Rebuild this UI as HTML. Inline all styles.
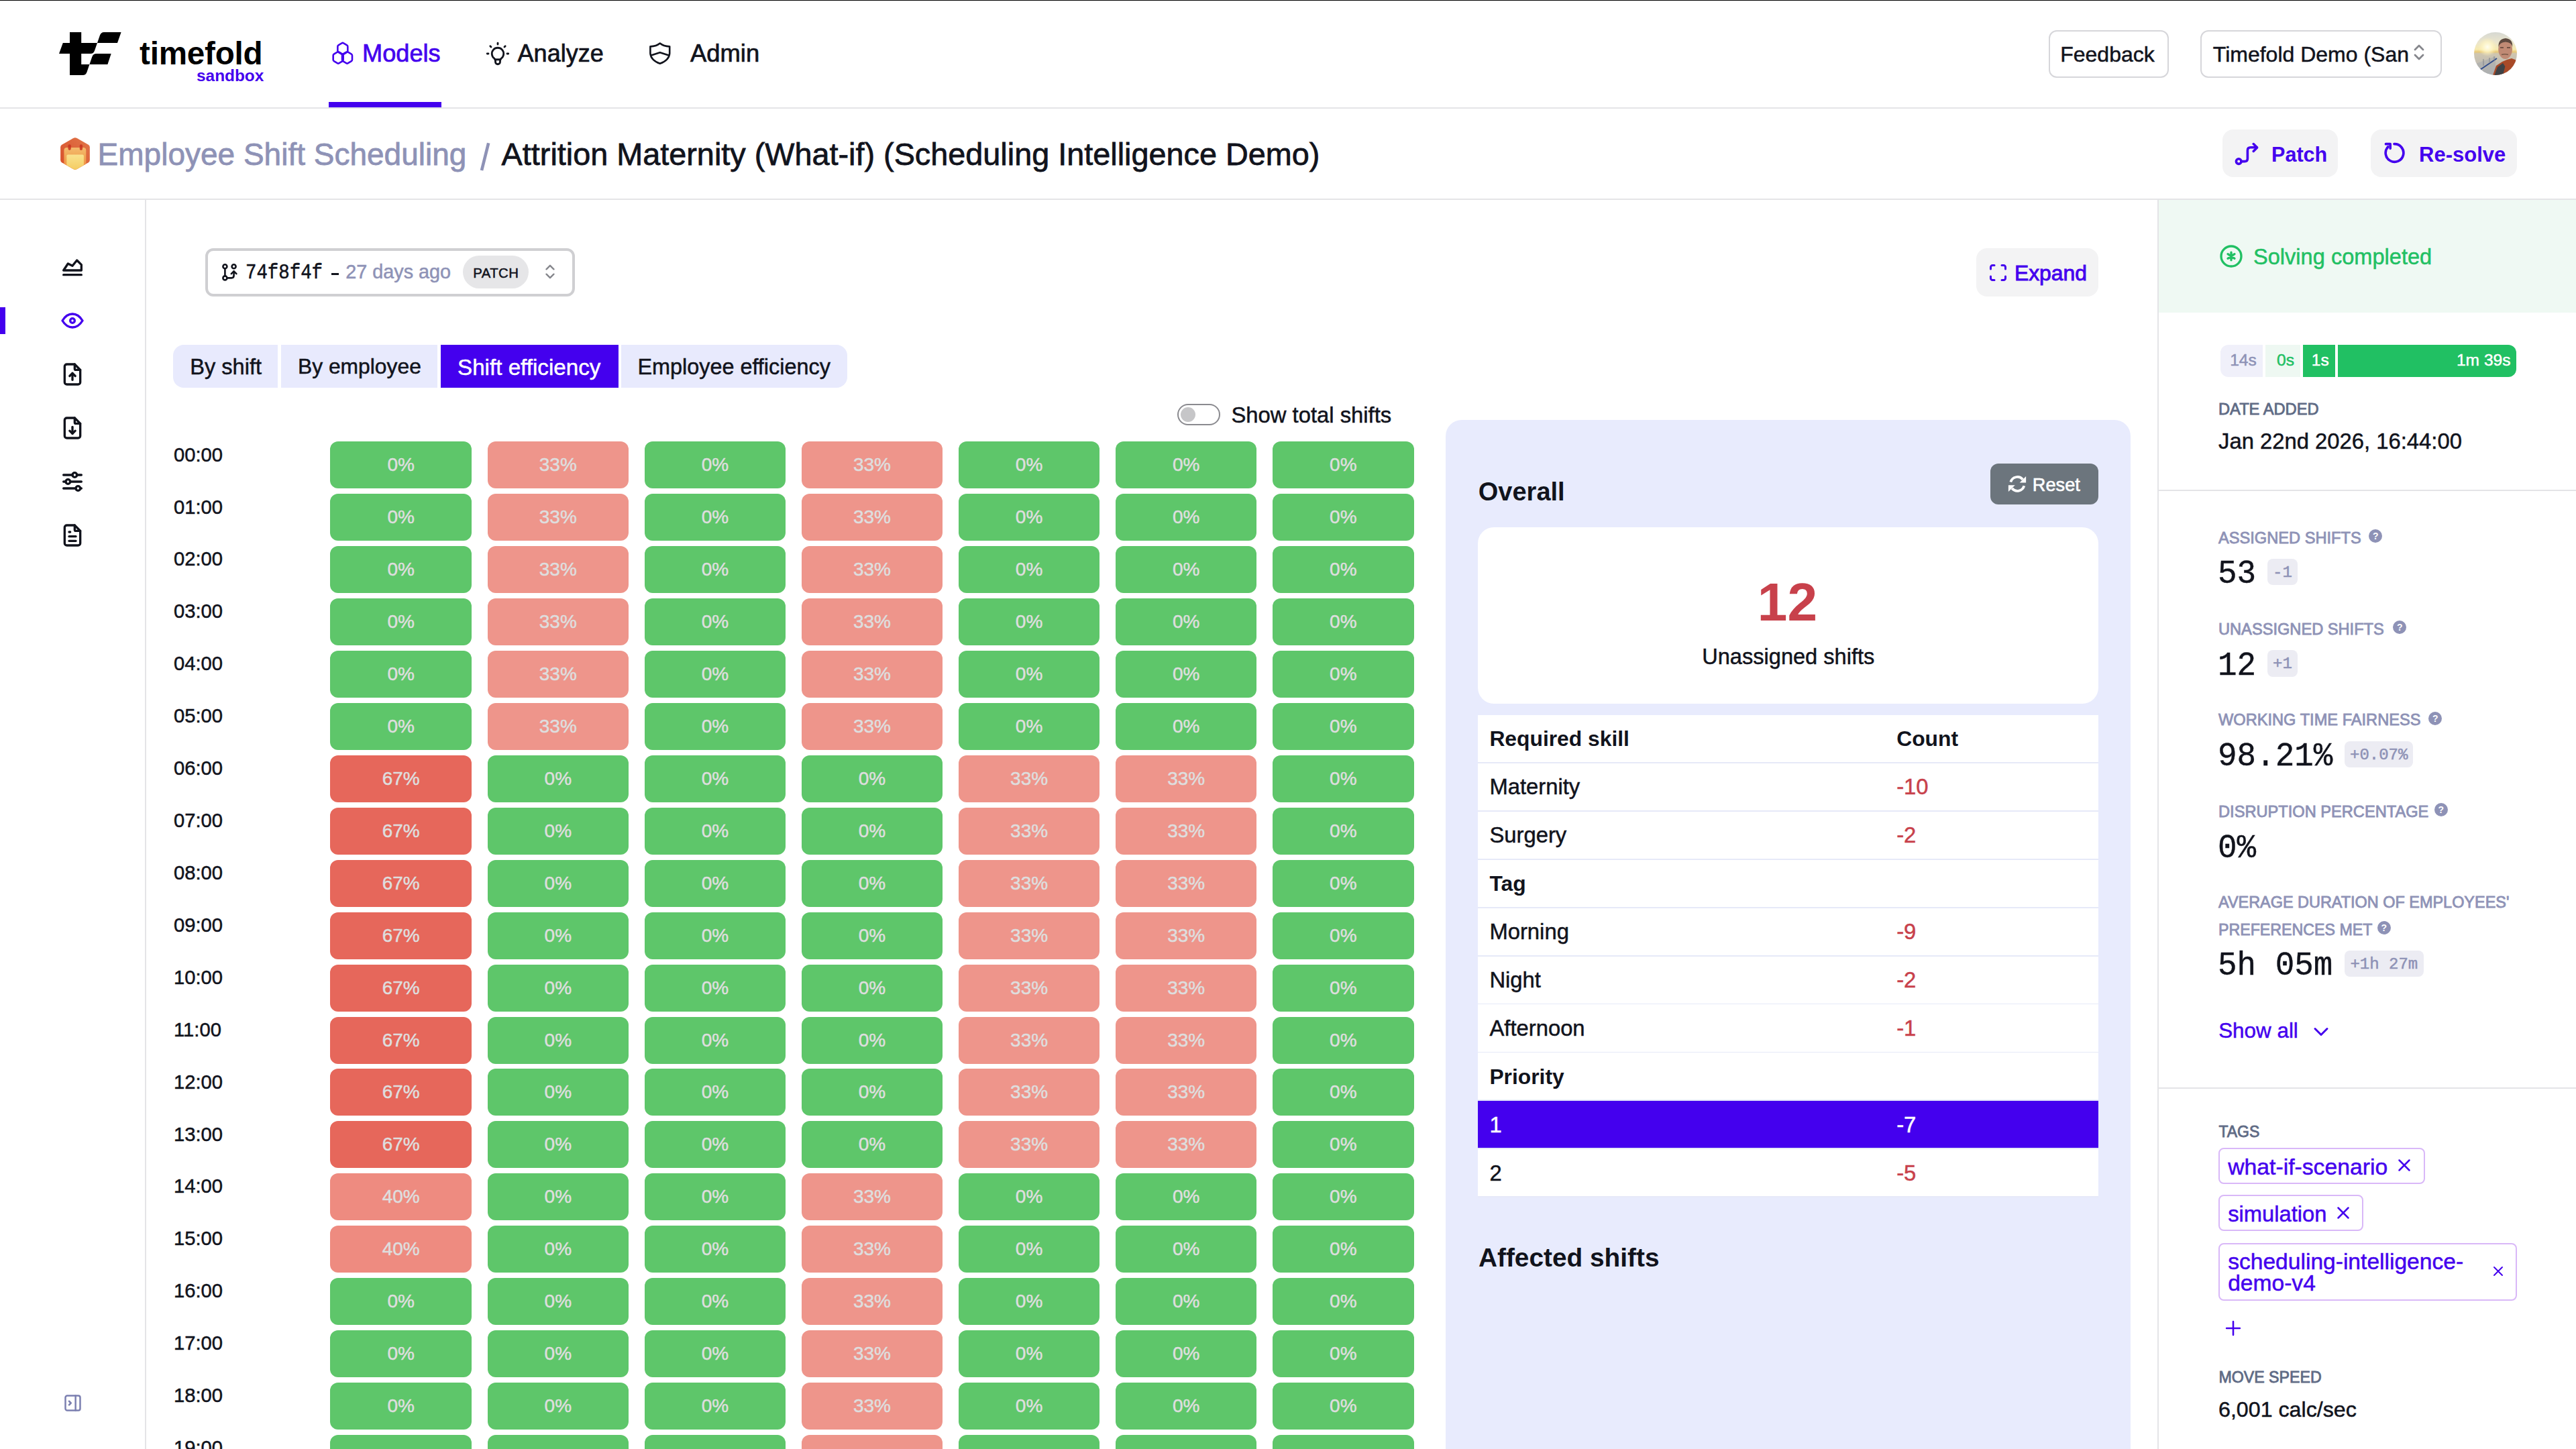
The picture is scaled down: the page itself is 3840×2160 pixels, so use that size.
<!DOCTYPE html>
<html><head><meta charset="utf-8"><title>Timefold</title>
<style>
html,body{margin:0;padding:0;width:3840px;height:2160px;overflow:hidden;background:#fff;}
#root{position:relative;width:1920px;height:1080px;zoom:2;-webkit-text-stroke-width:0.25px;font-family:"Liberation Sans",sans-serif;color:#11131c;overflow:hidden;background:#fff;}
@media (max-width:2500px){html,body{width:1920px;height:1080px;}#root{zoom:1;}}
.a{position:absolute;}
.t{position:absolute;white-space:nowrap;line-height:1;}
.b{font-weight:700;-webkit-text-stroke-width:0;}
.mono{font-family:"Liberation Mono",monospace;}
.pur{color:#4400ee;}
.gp{color:#8e92b6;}
.sl{color:#5f6b85;}
svg{position:absolute;overflow:visible;}
.ic{fill:none;stroke-linecap:round;stroke-linejoin:round;}
.cell{position:absolute;width:105.3px;height:35px;border-radius:6px;color:#dedede;font-size:14px;line-height:35px;text-align:center;}
.g{background:#5ec66a;}
.r67{background:#e6675b;}
.r33{background:#ee958b;}
.r40{background:#ee8b80;}
.tl{position:absolute;left:129.5px;font-size:14.6px;line-height:1;white-space:nowrap;}
.lbl{position:absolute;font-size:11.7px;font-weight:400;-webkit-text-stroke-width:0.42px;line-height:1;white-space:nowrap;letter-spacing:0px;}
.qm{position:absolute;width:10px;height:10px;border-radius:50%;background:#8e92b6;color:#fff;font-size:7px;font-weight:700;line-height:10px;text-align:center;margin-top:-0.9px;-webkit-text-stroke-width:0;}
.val{position:absolute;font-family:"Liberation Mono",monospace;font-size:23.8px;line-height:1;white-space:nowrap;color:#11131c;transform:translateY(2.3px) scaleY(1.05);transform-origin:0 85%;-webkit-text-stroke-width:0.2px;}
.dl{position:absolute;height:19.6px;border-radius:4px;background:#ececf3;color:#8e92b6;font-family:"Liberation Mono",monospace;font-size:12px;line-height:20.6px;text-align:center;white-space:nowrap;}
.tag{position:absolute;left:1653.3px;height:25px;border:1px solid #d9b8f8;border-radius:4px;color:#4400ee;font-size:16.5px;line-height:1;}
.tr{position:absolute;left:1101.5px;width:462.4px;height:35.1px;background:#fff;border-bottom:1px solid #e6e9f8;}
</style></head>
<body><div id="root">
<div class="a" style="left:0;top:0;width:1920px;height:0.5px;background:#000"></div>
<svg style="left:44px;top:24px;width:46.3px;height:32px" viewBox="0 0 92.6 64">
<path fill="#000" d="M16,0H33.2V16H57L53,27.5Q51.4,32 47,32H33.2V48H45.4L41.5,59.5Q39.8,64 35.5,64H16V32H0L5.8,16H16Z"/>
<path fill="#000" d="M67,0H92.6L87,16H57L60.8,5Q62.6,0 67,0Z"/>
<path fill="#000" d="M56,32H77.7L72.4,48H45.4L49,37.5Q50.6,32 56,32Z"/>
</svg>
<div class="t b" style="left:104px;top:28.1px;font-size:23.8px;letter-spacing:-0.1px;color:#000">timefold</div>
<div class="t b pur" style="left:146.5px;top:50.5px;font-size:12.2px">sandbox</div>
<svg class="ic" style="left:245px;top:29.6px;width:20px;height:20px" viewBox="0 0 24 24" stroke="#4400ee" stroke-width="1.55">
<path d="M4 18v-3.7a1.5 1.5 0 0 1 .7 -1.3l3 -1.8a1.5 1.5 0 0 1 1.6 0l3 1.8a1.5 1.5 0 0 1 .7 1.3v3.7a1.5 1.5 0 0 1 -.7 1.3l-3 1.8a1.5 1.5 0 0 1 -1.6 0l-3 -1.8a1.5 1.5 0 0 1 -.7 -1.3z"/>
<path d="M12 18v-3.7a1.5 1.5 0 0 1 .7 -1.3l3 -1.8a1.5 1.5 0 0 1 1.6 0l3 1.8a1.5 1.5 0 0 1 .7 1.3v3.7a1.5 1.5 0 0 1 -.7 1.3l-3 1.8a1.5 1.5 0 0 1 -1.6 0l-3 -1.8a1.5 1.5 0 0 1 -.7 -1.3z"/>
<path d="M8 10v-3.7a1.5 1.5 0 0 1 .7 -1.3l3 -1.8a1.5 1.5 0 0 1 1.6 0l3 1.8a1.5 1.5 0 0 1 .7 1.3v3.7a1.5 1.5 0 0 1 -.7 1.3l-3 1.8a1.5 1.5 0 0 1 -1.6 0l-3 -1.8a1.5 1.5 0 0 1 -.7 -1.3z"/>
</svg>
<div class="t pur" style="left:270px;top:31.2px;font-size:18.1px;-webkit-text-stroke-width:0.35px">Models</div>
<div class="a" style="left:245px;top:76px;width:84px;height:4px;background:#4400ee"></div>
<svg class="ic" style="left:360.45px;top:29.4px;width:21px;height:21px" viewBox="0 0 24 24" stroke="#11131c" stroke-width="1.6">
<path d="M3 12h1m8 -9v1m8 8h1m-15.4 -6.4l.7 .7m12.1 -.7l-.7 .7"/>
<path d="M9 16a5 5 0 1 1 6 0a3.5 3.5 0 0 0 -1 3a2 2 0 0 1 -4 0a3.5 3.5 0 0 0 -1 -3"/>
<path d="M9.7 17l4.6 0"/>
</svg>
<div class="t" style="left:385.8px;top:31.2px;font-size:18px;-webkit-text-stroke-width:0.35px">Analyze</div>
<svg class="ic" style="left:0;top:0;width:1px;height:1px" stroke="#11131c" stroke-width="1.3">
<path d="M491.9 32.3C489.9 34 487.7 34.6 484.7 34.7V39.8C485 43.3 488 46 491.9 47.4C495.8 46 498.8 43.3 499.1 39.8V34.7C496.1 34.6 493.9 34 491.9 32.3Z"/>
<path d="M485.3 41.2L491.9 39.1L498.5 41.3"/>
</svg>
<div class="t" style="left:514.5px;top:31.2px;font-size:18.2px;-webkit-text-stroke-width:0.35px">Admin</div>
<div class="a" style="left:0;top:80px;width:1920px;height:1px;background:#e4e4e7"></div>
<div class="a" style="left:1527px;top:22.4px;width:87.5px;height:33.5px;border:1px solid #d6d6da;border-radius:6px"></div>
<div class="t" style="left:1535.6px;top:32.3px;font-size:16px">Feedback</div>
<div class="a" style="left:1640px;top:22.4px;width:178px;height:33.5px;border:1px solid #d6d6da;border-radius:6px"></div>
<div class="t" style="left:1649.4px;top:32.3px;font-size:16px">Timefold Demo (San</div>
<svg class="ic" style="left:1797px;top:31px;width:12px;height:16px" viewBox="0 0 12 16" stroke="#85868c" stroke-width="1.4">
<path d="M3 6l3 -3l3 3M3 10l3 3l3 -3"/>
</svg>
<svg style="left:1844px;top:24px;width:32px;height:32px" viewBox="0 0 32 32">
<defs><clipPath id="avc"><circle cx="16" cy="16" r="16"/></clipPath>
<linearGradient id="sky" x1="0" y1="0" x2="0" y2="1"><stop offset="0" stop-color="#d6d8d2"/><stop offset="0.25" stop-color="#ece6cc"/><stop offset="0.40" stop-color="#f6eab0"/><stop offset="0.46" stop-color="#e8c878"/><stop offset="0.5" stop-color="#cfc6b0"/><stop offset="1" stop-color="#b4b6b8"/></linearGradient>
<radialGradient id="sun"><stop offset="0" stop-color="#fffef0"/><stop offset="0.5" stop-color="#fff6c8" stop-opacity="0.8"/><stop offset="1" stop-color="#fff0b0" stop-opacity="0"/></radialGradient></defs>
<g clip-path="url(#avc)">
<rect width="32" height="32" fill="url(#sky)"/>
<circle cx="10" cy="11" r="7" fill="url(#sun)"/>
<path d="M0 24L16 18V32H0Z" fill="#a9abae" opacity="0.6"/>
<path d="M4.5 28L17 19.5" stroke="#2e4a8a" stroke-width="0.9"/>
<path d="M7 20V25M11.5 19V23M15 18V21" stroke="#8a8c90" stroke-width="0.6"/>
<ellipse cx="23.3" cy="12.8" rx="5.2" ry="7.2" fill="#c08a74"/>
<path d="M18.2 11Q18 5 23.5 4.5Q29 5 28.6 11Q28 7.5 23.5 7.2Q19 7.5 18.2 11Z" fill="#5e4a40"/>
<path d="M19.5 11.5H22M24.5 11.5H27" stroke="#5a4034" stroke-width="0.8"/>
<path d="M20.5 16.8Q23 16 25.5 16.8" stroke="#7a5a48" stroke-width="0.8" fill="none"/>
<path d="M14 32L16.5 25L21 22L24.5 20.5L28 19.5L32 21V32Z" fill="#a84a28"/>
<path d="M15.2 32L17.5 26L21.5 23L23.2 25.5L21.5 32Z" fill="#3e4246"/>
</g></svg>
<div class="a" style="left:0;top:148px;width:1920px;height:1px;background:#e4e4e7"></div>
<svg style="left:44px;top:101px;width:24px;height:27px" viewBox="0 0 24 27">
<defs><linearGradient id="hx" x1="0" y1="1" x2="1" y2="0"><stop offset="0" stop-color="#d64a26"/><stop offset="1" stop-color="#e27a4c"/></linearGradient>
<linearGradient id="bd" x1="0" y1="0" x2="0" y2="1"><stop offset="0" stop-color="#f3bb6c"/><stop offset="0.5" stop-color="#f0a050"/><stop offset="1" stop-color="#f08a3c"/></linearGradient>
<linearGradient id="pg" x1="0" y1="0" x2="0" y2="1"><stop offset="0" stop-color="#f9e28e"/><stop offset="1" stop-color="#f4c95c"/></linearGradient>
<clipPath id="hc"><path d="M10.4 2.1Q12 1.2 13.6 2.1L21.9 6.9Q22.93 7.5 22.93 8.7V18.3Q22.93 19.5 21.9 20.1L13.6 24.9Q12 25.8 10.4 24.9L2.1 20.1Q1.07 19.5 1.07 18.3V8.7Q1.07 7.5 2.1 6.9Z"/></clipPath></defs>
<g clip-path="url(#hc)">
<rect x="0" y="0" width="24" height="27" fill="url(#hx)"/>
<path d="M3.73 11.1Q3.73 9.06 5.8 9.06H18.1Q20.15 9.06 20.15 11.1V27H3.73Z" fill="url(#bd)"/>
<path d="M5.66 15.3Q5.66 14.25 6.7 14.25H17.4Q18.46 14.25 18.46 15.3V27H5.66Z" fill="url(#pg)"/>
<rect x="6.75" y="6.6" width="2.15" height="4.4" rx="1.07" fill="#c8321e" opacity="0.85"/>
<rect x="15.4" y="6.6" width="2.1" height="4.4" rx="1.05" fill="#c8321e" opacity="0.85"/>
</g>
</svg>
<div class="t gp" style="left:72.8px;top:103.7px;font-size:23px;-webkit-text-stroke-width:0.38px">Employee Shift Scheduling</div>
<svg style="left:0;top:0;width:1px;height:1px"><path d="M359 127L364.1 106.6" stroke="#8e92b6" stroke-width="2.3" fill="none"/></svg>
<div class="t" style="left:373.8px;top:103.7px;font-size:23.4px;-webkit-text-stroke-width:0.38px">Attrition Maternity (What-if) (Scheduling Intelligence Demo)</div>
<div class="a" style="left:1656.4px;top:96.4px;width:86.2px;height:35.6px;border-radius:8px;background:#f3f3f4"></div>
<svg class="ic" style="left:1650px;top:95px;width:40px;height:40px" viewBox="0 0 40 40" stroke="#4400ee" stroke-width="1.8">
<circle cx="18.6" cy="25.3" r="1.9"/><path d="M20.5 25.3H23Q25.2 25.3 25.2 23.1V17.1Q25.2 14.9 27.4 14.9H32.2"/><path d="M29.6 12.3L32.3 15L29.6 17.7"/>
</svg>
<div class="t b pur" style="left:1693px;top:107.3px;font-size:15.3px">Patch</div>
<div class="a" style="left:1767px;top:96.4px;width:108.8px;height:35.6px;border-radius:8px;background:#f3f3f4"></div>
<svg class="ic" style="left:1774.5px;top:104px;width:20px;height:20px" viewBox="0 0 24 24" stroke="#4400ee" stroke-width="2.2">
<path d="M6.5 6.5a8 8 0 1 0 5.5 -2.5"/><path d="M4.5 4h4v4" transform="rotate(0)"/>
</svg>
<div class="t b pur" style="left:1803px;top:107.3px;font-size:15.5px">Re-solve</div>
<div class="a" style="left:108px;top:149px;width:1px;height:931px;background:#e4e4e7"></div>
<div class="a" style="left:0;top:229px;width:4px;height:20px;background:#4400ee"></div>
<svg class="ic" viewBox="0 0 24 24" stroke-width="2" stroke="#11131c" style="left:44px;top:189px;width:20px;height:20px">
<path d="M4 19h16"/><path d="M4 15l4 -6l4 2l4 -5l4 4v5h-16z"/></svg>
<svg class="ic" viewBox="0 0 24 24" stroke-width="2" stroke="#4400ee" style="left:44px;top:229px;width:20px;height:20px">
<path d="M10 12a2 2 0 1 0 4 0a2 2 0 0 0 -4 0"/><path d="M21 12c-2.4 4 -5.4 6 -9 6c-3.6 0 -6.6 -2 -9 -6c2.4 -4 5.4 -6 9 -6c3.6 0 6.6 2 9 6"/></svg>
<svg class="ic" viewBox="0 0 24 24" stroke-width="2" stroke="#11131c" style="left:44px;top:269px;width:20px;height:20px">
<path d="M14 3v4a1 1 0 0 0 1 1h4"/><path d="M17 21h-10a2 2 0 0 1 -2 -2v-14a2 2 0 0 1 2 -2h7l5 5v11a2 2 0 0 1 -2 2z"/><path d="M12 11v6"/><path d="M9.5 13.5l2.5 -2.5l2.5 2.5"/></svg>
<svg class="ic" viewBox="0 0 24 24" stroke-width="2" stroke="#11131c" style="left:44px;top:309px;width:20px;height:20px">
<path d="M14 3v4a1 1 0 0 0 1 1h4"/><path d="M17 21h-10a2 2 0 0 1 -2 -2v-14a2 2 0 0 1 2 -2h7l5 5v11a2 2 0 0 1 -2 2z"/><path d="M12 17v-6"/><path d="M9.5 14.5l2.5 2.5l2.5 -2.5"/></svg>
<svg class="ic" viewBox="0 0 24 24" stroke-width="2" stroke="#11131c" style="left:44px;top:349px;width:20px;height:20px">
<path d="M14 6m-2 0a2 2 0 1 0 4 0a2 2 0 1 0 -4 0"/><path d="M4 6l8 0"/><path d="M16 6l4 0"/><path d="M8 12m-2 0a2 2 0 1 0 4 0a2 2 0 1 0 -4 0"/><path d="M4 12l2 0"/><path d="M10 12l10 0"/><path d="M17 18m-2 0a2 2 0 1 0 4 0a2 2 0 1 0 -4 0"/><path d="M4 18l11 0"/><path d="M19 18l1 0"/></svg>
<svg class="ic" viewBox="0 0 24 24" stroke-width="2" stroke="#11131c" style="left:44px;top:389px;width:20px;height:20px">
<path d="M14 3v4a1 1 0 0 0 1 1h4"/><path d="M17 21h-10a2 2 0 0 1 -2 -2v-14a2 2 0 0 1 2 -2h7l5 5v11a2 2 0 0 1 -2 2z"/><path d="M9 9l1 0"/><path d="M9 13l6 0"/><path d="M9 17l6 0"/></svg>
<svg class="ic" viewBox="0 0 24 24" stroke-width="1.8" stroke="#7b7fb0" style="left:45.75px;top:1037.6px;width:16.5px;height:16.5px">
<path d="M4 4m0 2a2 2 0 0 1 2 -2h12a2 2 0 0 1 2 2v12a2 2 0 0 1 -2 2h-12a2 2 0 0 1 -2 -2z"/><path d="M15 4v16"/><path d="M8 10l2 2l-2 2"/></svg>
<div class="a" style="left:153px;top:185px;width:271.5px;height:32px;border:2px solid #cfcfd2;border-radius:6px"></div>
<svg class="ic" viewBox="0 0 24 24" stroke-width="1.3" stroke="#11131c" style="left:160px;top:192px;width:24px;height:24px">
<circle cx="7.7" cy="6.6" r="1.5"/><circle cx="7.7" cy="15.2" r="1.5"/><circle cx="14.3" cy="6.6" r="1.5"/><path d="M7.7 8.1V13.7"/><path d="M9.2 15.2H12.5Q14.3 15.2 14.3 13.4V10.3"/><path d="M12.4 12.1L14.3 10.2L16.2 12.1"/></svg>
<div class="t mono" style="left:183px;top:197.2px;font-size:13.7px;transform:scaleY(1.14);transform-origin:0 85%">74f8f4f</div>
<div class="a" style="left:247px;top:203.6px;width:5.4px;height:1.3px;background:#11131c"></div>
<div class="t gp" style="left:257.6px;top:195.6px;font-size:14.4px">27 days ago</div>
<div class="a" style="left:344.8px;top:190.6px;width:49.2px;height:24.4px;border-radius:12.2px;background:#e6e6e8"></div>
<div class="t" style="left:352.6px;top:198.5px;font-size:10.2px;letter-spacing:0.2px">PATCH</div>
<svg class="ic" viewBox="0 0 12 16" stroke-width="1.3" stroke="#85868c" style="left:404.5px;top:195px;width:11px;height:15px">
<path d="M3 6l3 -3l3 3M3 10l3 3l3 -3"/></svg>
<div class="a" style="left:1473px;top:184.9px;width:91px;height:35.9px;border-radius:8px;background:#f3f3f4"></div>
<svg class="ic" viewBox="0 0 24 24" stroke-width="2.2" stroke="#4400ee" style="left:1480.75px;top:194.75px;width:16.5px;height:16.5px">
<path d="M4 8v-2a2 2 0 0 1 2 -2h2"/><path d="M4 16v2a2 2 0 0 0 2 2h2"/><path d="M16 4h2a2 2 0 0 1 2 2v2"/><path d="M16 20h2a2 2 0 0 0 2 -2v-2"/></svg>
<div class="t pur" style="left:1501.5px;top:196px;font-size:15.9px;-webkit-text-stroke-width:0.45px">Expand</div>
<div class="a" style="left:129px;top:257px;width:78px;height:32px;background:#e8eafd;border-radius:8px 0 0 8px"></div>
<div class="t" style="left:141.6px;top:265.7px;font-size:16.3px;color:#11131c">By shift</div>
<div class="a" style="left:209.6px;top:257px;width:116.4px;height:32px;background:#e8eafd;border-radius:0"></div>
<div class="t" style="left:222px;top:265.7px;font-size:15.9px;color:#11131c">By employee</div>
<div class="a" style="left:328.5px;top:257px;width:132.5px;height:32px;background:#4400ee;border-radius:0"></div>
<div class="t" style="left:341px;top:265.7px;font-size:16.6px;color:#fff">Shift efficiency</div>
<div class="a" style="left:463px;top:257px;width:168.70000000000005px;height:32px;background:#e8eafd;border-radius:0 8px 8px 0"></div>
<div class="t" style="left:475.2px;top:265.7px;font-size:16.2px;color:#11131c">Employee efficiency</div>
<div class="a" style="left:877.5px;top:301px;width:30px;height:14px;border:1px solid #8a8a8f;border-radius:8px"></div>
<div class="a" style="left:880px;top:303.5px;width:11px;height:11px;border-radius:50%;background:#c6c6c8"></div>
<div class="t" style="left:917.7px;top:301.5px;font-size:16.4px">Show total shifts</div>
<div class="tl" style="top:331.80px">00:00</div>
<div class="cell g" style="left:246.2px;top:329.20px">0%</div>
<div class="cell r33" style="left:363.25px;top:329.20px">33%</div>
<div class="cell g" style="left:480.3px;top:329.20px">0%</div>
<div class="cell r33" style="left:597.35px;top:329.20px">33%</div>
<div class="cell g" style="left:714.4px;top:329.20px">0%</div>
<div class="cell g" style="left:831.45px;top:329.20px">0%</div>
<div class="cell g" style="left:948.5px;top:329.20px">0%</div>
<div class="tl" style="top:370.76px">01:00</div>
<div class="cell g" style="left:246.2px;top:368.16px">0%</div>
<div class="cell r33" style="left:363.25px;top:368.16px">33%</div>
<div class="cell g" style="left:480.3px;top:368.16px">0%</div>
<div class="cell r33" style="left:597.35px;top:368.16px">33%</div>
<div class="cell g" style="left:714.4px;top:368.16px">0%</div>
<div class="cell g" style="left:831.45px;top:368.16px">0%</div>
<div class="cell g" style="left:948.5px;top:368.16px">0%</div>
<div class="tl" style="top:409.72px">02:00</div>
<div class="cell g" style="left:246.2px;top:407.12px">0%</div>
<div class="cell r33" style="left:363.25px;top:407.12px">33%</div>
<div class="cell g" style="left:480.3px;top:407.12px">0%</div>
<div class="cell r33" style="left:597.35px;top:407.12px">33%</div>
<div class="cell g" style="left:714.4px;top:407.12px">0%</div>
<div class="cell g" style="left:831.45px;top:407.12px">0%</div>
<div class="cell g" style="left:948.5px;top:407.12px">0%</div>
<div class="tl" style="top:448.68px">03:00</div>
<div class="cell g" style="left:246.2px;top:446.08px">0%</div>
<div class="cell r33" style="left:363.25px;top:446.08px">33%</div>
<div class="cell g" style="left:480.3px;top:446.08px">0%</div>
<div class="cell r33" style="left:597.35px;top:446.08px">33%</div>
<div class="cell g" style="left:714.4px;top:446.08px">0%</div>
<div class="cell g" style="left:831.45px;top:446.08px">0%</div>
<div class="cell g" style="left:948.5px;top:446.08px">0%</div>
<div class="tl" style="top:487.64px">04:00</div>
<div class="cell g" style="left:246.2px;top:485.04px">0%</div>
<div class="cell r33" style="left:363.25px;top:485.04px">33%</div>
<div class="cell g" style="left:480.3px;top:485.04px">0%</div>
<div class="cell r33" style="left:597.35px;top:485.04px">33%</div>
<div class="cell g" style="left:714.4px;top:485.04px">0%</div>
<div class="cell g" style="left:831.45px;top:485.04px">0%</div>
<div class="cell g" style="left:948.5px;top:485.04px">0%</div>
<div class="tl" style="top:526.60px">05:00</div>
<div class="cell g" style="left:246.2px;top:524.00px">0%</div>
<div class="cell r33" style="left:363.25px;top:524.00px">33%</div>
<div class="cell g" style="left:480.3px;top:524.00px">0%</div>
<div class="cell r33" style="left:597.35px;top:524.00px">33%</div>
<div class="cell g" style="left:714.4px;top:524.00px">0%</div>
<div class="cell g" style="left:831.45px;top:524.00px">0%</div>
<div class="cell g" style="left:948.5px;top:524.00px">0%</div>
<div class="tl" style="top:565.56px">06:00</div>
<div class="cell r67" style="left:246.2px;top:562.96px">67%</div>
<div class="cell g" style="left:363.25px;top:562.96px">0%</div>
<div class="cell g" style="left:480.3px;top:562.96px">0%</div>
<div class="cell g" style="left:597.35px;top:562.96px">0%</div>
<div class="cell r33" style="left:714.4px;top:562.96px">33%</div>
<div class="cell r33" style="left:831.45px;top:562.96px">33%</div>
<div class="cell g" style="left:948.5px;top:562.96px">0%</div>
<div class="tl" style="top:604.52px">07:00</div>
<div class="cell r67" style="left:246.2px;top:601.92px">67%</div>
<div class="cell g" style="left:363.25px;top:601.92px">0%</div>
<div class="cell g" style="left:480.3px;top:601.92px">0%</div>
<div class="cell g" style="left:597.35px;top:601.92px">0%</div>
<div class="cell r33" style="left:714.4px;top:601.92px">33%</div>
<div class="cell r33" style="left:831.45px;top:601.92px">33%</div>
<div class="cell g" style="left:948.5px;top:601.92px">0%</div>
<div class="tl" style="top:643.48px">08:00</div>
<div class="cell r67" style="left:246.2px;top:640.88px">67%</div>
<div class="cell g" style="left:363.25px;top:640.88px">0%</div>
<div class="cell g" style="left:480.3px;top:640.88px">0%</div>
<div class="cell g" style="left:597.35px;top:640.88px">0%</div>
<div class="cell r33" style="left:714.4px;top:640.88px">33%</div>
<div class="cell r33" style="left:831.45px;top:640.88px">33%</div>
<div class="cell g" style="left:948.5px;top:640.88px">0%</div>
<div class="tl" style="top:682.44px">09:00</div>
<div class="cell r67" style="left:246.2px;top:679.84px">67%</div>
<div class="cell g" style="left:363.25px;top:679.84px">0%</div>
<div class="cell g" style="left:480.3px;top:679.84px">0%</div>
<div class="cell g" style="left:597.35px;top:679.84px">0%</div>
<div class="cell r33" style="left:714.4px;top:679.84px">33%</div>
<div class="cell r33" style="left:831.45px;top:679.84px">33%</div>
<div class="cell g" style="left:948.5px;top:679.84px">0%</div>
<div class="tl" style="top:721.40px">10:00</div>
<div class="cell r67" style="left:246.2px;top:718.80px">67%</div>
<div class="cell g" style="left:363.25px;top:718.80px">0%</div>
<div class="cell g" style="left:480.3px;top:718.80px">0%</div>
<div class="cell g" style="left:597.35px;top:718.80px">0%</div>
<div class="cell r33" style="left:714.4px;top:718.80px">33%</div>
<div class="cell r33" style="left:831.45px;top:718.80px">33%</div>
<div class="cell g" style="left:948.5px;top:718.80px">0%</div>
<div class="tl" style="top:760.36px">11:00</div>
<div class="cell r67" style="left:246.2px;top:757.76px">67%</div>
<div class="cell g" style="left:363.25px;top:757.76px">0%</div>
<div class="cell g" style="left:480.3px;top:757.76px">0%</div>
<div class="cell g" style="left:597.35px;top:757.76px">0%</div>
<div class="cell r33" style="left:714.4px;top:757.76px">33%</div>
<div class="cell r33" style="left:831.45px;top:757.76px">33%</div>
<div class="cell g" style="left:948.5px;top:757.76px">0%</div>
<div class="tl" style="top:799.32px">12:00</div>
<div class="cell r67" style="left:246.2px;top:796.72px">67%</div>
<div class="cell g" style="left:363.25px;top:796.72px">0%</div>
<div class="cell g" style="left:480.3px;top:796.72px">0%</div>
<div class="cell g" style="left:597.35px;top:796.72px">0%</div>
<div class="cell r33" style="left:714.4px;top:796.72px">33%</div>
<div class="cell r33" style="left:831.45px;top:796.72px">33%</div>
<div class="cell g" style="left:948.5px;top:796.72px">0%</div>
<div class="tl" style="top:838.28px">13:00</div>
<div class="cell r67" style="left:246.2px;top:835.68px">67%</div>
<div class="cell g" style="left:363.25px;top:835.68px">0%</div>
<div class="cell g" style="left:480.3px;top:835.68px">0%</div>
<div class="cell g" style="left:597.35px;top:835.68px">0%</div>
<div class="cell r33" style="left:714.4px;top:835.68px">33%</div>
<div class="cell r33" style="left:831.45px;top:835.68px">33%</div>
<div class="cell g" style="left:948.5px;top:835.68px">0%</div>
<div class="tl" style="top:877.24px">14:00</div>
<div class="cell r40" style="left:246.2px;top:874.64px">40%</div>
<div class="cell g" style="left:363.25px;top:874.64px">0%</div>
<div class="cell g" style="left:480.3px;top:874.64px">0%</div>
<div class="cell r33" style="left:597.35px;top:874.64px">33%</div>
<div class="cell g" style="left:714.4px;top:874.64px">0%</div>
<div class="cell g" style="left:831.45px;top:874.64px">0%</div>
<div class="cell g" style="left:948.5px;top:874.64px">0%</div>
<div class="tl" style="top:916.20px">15:00</div>
<div class="cell r40" style="left:246.2px;top:913.60px">40%</div>
<div class="cell g" style="left:363.25px;top:913.60px">0%</div>
<div class="cell g" style="left:480.3px;top:913.60px">0%</div>
<div class="cell r33" style="left:597.35px;top:913.60px">33%</div>
<div class="cell g" style="left:714.4px;top:913.60px">0%</div>
<div class="cell g" style="left:831.45px;top:913.60px">0%</div>
<div class="cell g" style="left:948.5px;top:913.60px">0%</div>
<div class="tl" style="top:955.16px">16:00</div>
<div class="cell g" style="left:246.2px;top:952.56px">0%</div>
<div class="cell g" style="left:363.25px;top:952.56px">0%</div>
<div class="cell g" style="left:480.3px;top:952.56px">0%</div>
<div class="cell r33" style="left:597.35px;top:952.56px">33%</div>
<div class="cell g" style="left:714.4px;top:952.56px">0%</div>
<div class="cell g" style="left:831.45px;top:952.56px">0%</div>
<div class="cell g" style="left:948.5px;top:952.56px">0%</div>
<div class="tl" style="top:994.12px">17:00</div>
<div class="cell g" style="left:246.2px;top:991.52px">0%</div>
<div class="cell g" style="left:363.25px;top:991.52px">0%</div>
<div class="cell g" style="left:480.3px;top:991.52px">0%</div>
<div class="cell r33" style="left:597.35px;top:991.52px">33%</div>
<div class="cell g" style="left:714.4px;top:991.52px">0%</div>
<div class="cell g" style="left:831.45px;top:991.52px">0%</div>
<div class="cell g" style="left:948.5px;top:991.52px">0%</div>
<div class="tl" style="top:1033.08px">18:00</div>
<div class="cell g" style="left:246.2px;top:1030.48px">0%</div>
<div class="cell g" style="left:363.25px;top:1030.48px">0%</div>
<div class="cell g" style="left:480.3px;top:1030.48px">0%</div>
<div class="cell r33" style="left:597.35px;top:1030.48px">33%</div>
<div class="cell g" style="left:714.4px;top:1030.48px">0%</div>
<div class="cell g" style="left:831.45px;top:1030.48px">0%</div>
<div class="cell g" style="left:948.5px;top:1030.48px">0%</div>
<div class="tl" style="top:1072.04px">19:00</div>
<div class="cell g" style="left:246.2px;top:1069.44px">0%</div>
<div class="cell g" style="left:363.25px;top:1069.44px">0%</div>
<div class="cell g" style="left:480.3px;top:1069.44px">0%</div>
<div class="cell r33" style="left:597.35px;top:1069.44px">33%</div>
<div class="cell g" style="left:714.4px;top:1069.44px">0%</div>
<div class="cell g" style="left:831.45px;top:1069.44px">0%</div>
<div class="cell g" style="left:948.5px;top:1069.44px">0%</div>
<div class="a" style="left:1077.5px;top:312.8px;width:510.5px;height:800px;background:#e8ebfd;border-radius:12px"></div>
<div class="t b" style="left:1101.9px;top:356.75px;font-size:19px">Overall</div>
<div class="a" style="left:1483.4px;top:345.3px;width:80.5px;height:30.7px;border-radius:6px;background:#6c757d"></div>
<svg style="left:0;top:0;width:1px;height:1px"><g fill="none" stroke="#fff" stroke-width="1.9">
<path d="M1498.65 359.27A5.2 5.2 0 0 1 1507.63 357.36"/><path d="M1508.65 362.13A5.2 5.2 0 0 1 1499.67 364.04"/></g>
<path fill="#fff" d="M1510.05 355L1510.05 359.74L1505.3 359.74Z"/><path fill="#fff" d="M1496.95 361.66L1496.95 366.55L1501.86 361.66Z"/></svg>
<div class="t" style="left:1514.9px;top:354.3px;font-size:13.6px;color:#fff;-webkit-text-stroke-width:0.3px">Reset</div>
<div class="a" style="left:1101.7px;top:393px;width:462.3px;height:131.4px;background:#fff;border-radius:12px"></div>
<div class="t b" style="left:1309.9px;top:428.3px;font-size:40.1px;color:#c8414b">12</div>
<div class="t" style="left:1268.6px;top:481.4px;font-size:16.3px">Unassigned shifts</div>
<div class="tr" style="top:533.00px;background:#fff"></div>
<div class="t" style="left:1110.2px;top:543.20px;font-size:15.9px;font-weight:700;-webkit-text-stroke-width:0;color:#11131c">Required skill</div>
<div class="t" style="left:1413.6px;top:543.20px;font-size:15.9px;font-weight:700;-webkit-text-stroke-width:0;color:#11131c">Count</div>
<div class="tr" style="top:568.95px;background:#fff"></div>
<div class="t" style="left:1110.2px;top:578.65px;font-size:16.4px;font-weight:400;-webkit-text-stroke-width:0.25px;color:#11131c">Maternity</div>
<div class="t" style="left:1413.6px;top:578.65px;font-size:16.4px;font-weight:400;-webkit-text-stroke-width:0.25px;color:#c8414b">-10</div>
<div class="tr" style="top:604.90px;background:#fff"></div>
<div class="t" style="left:1110.2px;top:614.60px;font-size:16.4px;font-weight:400;-webkit-text-stroke-width:0.25px;color:#11131c">Surgery</div>
<div class="t" style="left:1413.6px;top:614.60px;font-size:16.4px;font-weight:400;-webkit-text-stroke-width:0.25px;color:#c8414b">-2</div>
<div class="tr" style="top:640.85px;background:#fff"></div>
<div class="t" style="left:1110.2px;top:651.05px;font-size:15.9px;font-weight:700;-webkit-text-stroke-width:0;color:#11131c">Tag</div>
<div class="tr" style="top:676.80px;background:#fff"></div>
<div class="t" style="left:1110.2px;top:686.50px;font-size:16.4px;font-weight:400;-webkit-text-stroke-width:0.25px;color:#11131c">Morning</div>
<div class="t" style="left:1413.6px;top:686.50px;font-size:16.4px;font-weight:400;-webkit-text-stroke-width:0.25px;color:#c8414b">-9</div>
<div class="tr" style="top:712.75px;background:#fff"></div>
<div class="t" style="left:1110.2px;top:722.45px;font-size:16.4px;font-weight:400;-webkit-text-stroke-width:0.25px;color:#11131c">Night</div>
<div class="t" style="left:1413.6px;top:722.45px;font-size:16.4px;font-weight:400;-webkit-text-stroke-width:0.25px;color:#c8414b">-2</div>
<div class="tr" style="top:748.70px;background:#fff"></div>
<div class="t" style="left:1110.2px;top:758.40px;font-size:16.4px;font-weight:400;-webkit-text-stroke-width:0.25px;color:#11131c">Afternoon</div>
<div class="t" style="left:1413.6px;top:758.40px;font-size:16.4px;font-weight:400;-webkit-text-stroke-width:0.25px;color:#c8414b">-1</div>
<div class="tr" style="top:784.65px;background:#fff"></div>
<div class="t" style="left:1110.2px;top:794.85px;font-size:15.9px;font-weight:700;-webkit-text-stroke-width:0;color:#11131c">Priority</div>
<div class="tr" style="top:820.60px;background:#4400ee"></div>
<div class="t" style="left:1110.2px;top:830.30px;font-size:16.4px;font-weight:400;-webkit-text-stroke-width:0.25px;color:#fff">1</div>
<div class="t" style="left:1413.6px;top:830.30px;font-size:16.4px;font-weight:400;-webkit-text-stroke-width:0.25px;color:#fff">-7</div>
<div class="tr" style="top:856.55px;background:#fff"></div>
<div class="t" style="left:1110.2px;top:866.25px;font-size:16.4px;font-weight:400;-webkit-text-stroke-width:0.25px;color:#11131c">2</div>
<div class="t" style="left:1413.6px;top:866.25px;font-size:16.4px;font-weight:400;-webkit-text-stroke-width:0.25px;color:#c8414b">-5</div>
<div class="t b" style="left:1102px;top:928px;font-size:19.4px">Affected shifts</div>
<div class="a" style="left:1608px;top:149px;width:1px;height:931px;background:#e4e4e7"></div>
<div class="a" style="left:1609px;top:149px;width:311px;height:84px;background:#eff9f3"></div>
<svg class="ic" viewBox="0 0 24 24" stroke-width="2" stroke="#21c063" style="left:1653px;top:181px;width:20px;height:20px">
<path d="M12 12m-9 0a9 9 0 1 0 18 0a9 9 0 1 0 -18 0"/><path d="M12 8.5v7M9 10l6 4M15 10l-6 4"/></svg>
<div class="t" style="left:1679.5px;top:183.5px;font-size:16.3px;color:#21c063">Solving completed</div>
<div class="a" style="left:1655px;top:257px;width:31.3px;height:24px;background:#f0f0fa;border-radius:6px 0 0 6px"></div>
<div class="a" style="left:1688.5px;top:257px;width:25.8px;height:24px;background:#eef8f2"></div>
<div class="a" style="left:1716.4px;top:257px;width:23.9px;height:24px;background:#21c063"></div>
<div class="a" style="left:1742.5px;top:257px;width:133.2px;height:24px;background:#21c063;border-radius:0 6px 6px 0"></div>
<div class="t" style="left:1581.9px;width:100px;text-align:right;top:262.6px;font-size:12.3px;color:#8e92b6">14s</div>
<div class="t" style="left:1610px;width:100px;text-align:right;top:262.6px;font-size:12.3px;color:#21c063">0s</div>
<div class="t" style="left:1635.9px;width:100px;text-align:right;top:262.6px;font-size:12.3px;color:#fff">1s</div>
<div class="t" style="left:1771.3px;width:100px;text-align:right;top:262.6px;font-size:12.3px;color:#fff">1m 39s</div>
<div class="lbl sl" style="left:1653.5px;top:299.6px;font-size:11.85px">DATE ADDED</div>
<div class="t" style="left:1653.5px;top:321px;font-size:16.4px">Jan 22nd 2026, 16:44:00</div>
<div class="a" style="left:1609px;top:365px;width:311px;height:1px;background:#e4e4e7"></div>
<div class="lbl gp" style="left:1653.5px;top:395.30px;font-size:11.82px">ASSIGNED SHIFTS</div>
<div class="val" style="left:1653px;top:414.70px">53</div>
<div class="dl" style="left:1690px;top:416.60px;width:22.5px">-1</div>
<div class="lbl gp" style="left:1653.5px;top:463.40px;font-size:11.82px">UNASSIGNED SHIFTS</div>
<div class="val" style="left:1653px;top:482.80px">12</div>
<div class="dl" style="left:1690px;top:484.70px;width:22.5px">+1</div>
<div class="lbl gp" style="left:1653.5px;top:531.20px;font-size:11.82px">WORKING TIME FAIRNESS</div>
<div class="val" style="left:1653px;top:550.60px">98.21%</div>
<div class="dl" style="left:1747.5px;top:552.50px;width:51.2px">+0.07%</div>
<div class="lbl gp" style="left:1653.5px;top:599.40px;font-size:11.82px">DISRUPTION PERCENTAGE</div>
<div class="val" style="left:1653px;top:618.80px">0%</div>
<div class="qm" style="left:1765.6px;top:395.4px">?</div>
<div class="qm" style="left:1783.7px;top:463.5px">?</div>
<div class="qm" style="left:1810.1px;top:531.3px">?</div>
<div class="qm" style="left:1814.4px;top:599.5px">?</div>
<div class="lbl gp" style="left:1653.5px;top:667.2px;font-size:11.72px">AVERAGE DURATION OF EMPLOYEES'</div>
<div class="lbl gp" style="left:1653.5px;top:687.5px;font-size:11.6px">PREFERENCES MET</div>
<div class="qm" style="left:1771.9px;top:687.5px">?</div>
<div class="val" style="left:1653px;top:706.3px">5h 05m</div>
<div class="dl" style="left:1747.4px;top:708.6px;width:59px">+1h 27m</div>
<div class="t pur" style="left:1653.6px;top:760.5px;font-size:15.7px">Show all</div>
<svg class="ic" viewBox="0 0 24 24" stroke-width="2" stroke="#4400ee" style="left:1721px;top:760px;width:18px;height:18px">
<path d="M6 9l6 6l6 -6"/></svg>
<div class="a" style="left:1609px;top:810.5px;width:311px;height:1px;background:#e4e4e7"></div>
<div class="lbl sl" style="left:1653.7px;top:838px;font-size:11.5px">TAGS</div>
<div class="tag" style="top:855.3px;width:152px"></div>
<div class="t pur" style="left:1660.6px;top:861.5px;font-size:16.86px">what-if-scenario</div>
<div class="tag" style="top:890.7px;width:106px"></div>
<div class="t pur" style="left:1660.6px;top:897px;font-size:16.35px">simulation</div>
<div class="tag" style="top:926.5px;width:220.5px;height:41.2px"></div>
<div class="t pur" style="left:1660.6px;top:932px;font-size:16.8px">scheduling-intelligence-</div>
<div class="t pur" style="left:1660.6px;top:947.9px;font-size:16.8px">demo-v4</div>
<svg class="ic" viewBox="0 0 24 24" stroke="#4400ee" stroke-width="2" style="left:1784.5px;top:861px;width:15px;height:15px"><path d="M18 6l-12 12M6 6l12 12"/></svg>
<svg class="ic" viewBox="0 0 24 24" stroke="#4400ee" stroke-width="2" style="left:1739px;top:896.5px;width:15px;height:15px"><path d="M18 6l-12 12M6 6l12 12"/></svg>
<svg class="ic" viewBox="0 0 24 24" stroke="#4400ee" stroke-width="2" style="left:1856px;top:941.5px;width:12px;height:12px"><path d="M18 6l-12 12M6 6l12 12"/></svg>
<svg class="ic" viewBox="0 0 24 24" stroke="#4400ee" stroke-width="1.8" style="left:1656px;top:981.5px;width:17px;height:17px"><path d="M12 5v14M5 12h14"/></svg>
<div class="lbl sl" style="left:1653.7px;top:1021px;font-size:11.6px">MOVE SPEED</div>
<div class="t" style="left:1653.5px;top:1042.6px;font-size:16.1px">6,001 calc/sec</div>
</div></body></html>
